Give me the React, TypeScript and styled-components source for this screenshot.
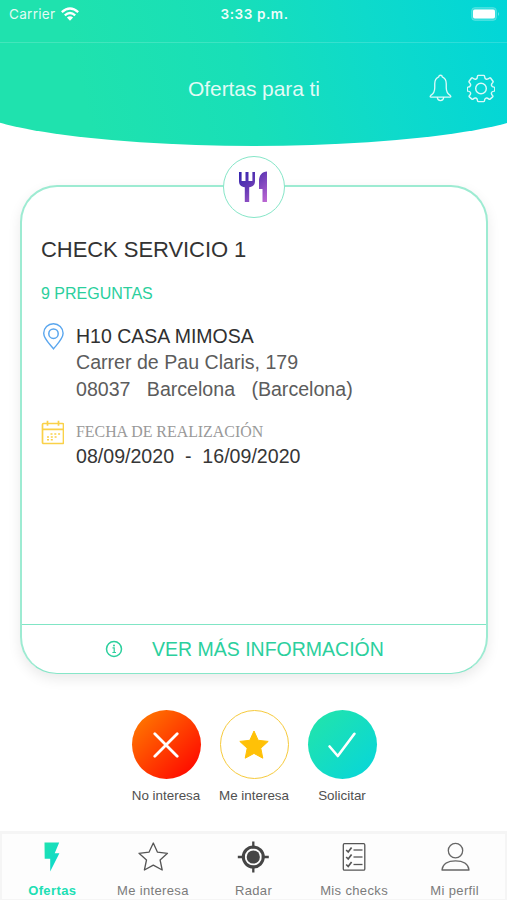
import React from 'react';
import styled, { createGlobalStyle, css } from 'styled-components';

const GlobalStyle = createGlobalStyle`
  * { box-sizing: border-box; }
  body { margin: 0; background: #fff; font-family: "Liberation Sans", Arial, sans-serif; }
  svg { display: block; flex: none; }
`;

const Screen = styled.div`
  width: 507px;
  height: 900px;
  overflow: hidden;
  display: flex;
  flex-direction: column;
  background: #fff;
`;

const Header = styled.header`
  position: relative;
  height: 146px;
  flex: none;
  overflow: hidden;
  color: #fff;
  &::before {
    content: '';
    position: absolute;
    inset: 0 -44.5px;
    border-radius: 0 0 298px 298px / 0 0 48.6px 48.6px;
    background: linear-gradient(76deg, #1fe2ae 22%, #18dfb8 48%, #0edacb 70%, #00d5da 96%);
  }
`;

const StatusBar = styled.div`
  position: relative;
  display: grid;
  grid-template-columns: 1fr auto 1fr;
  align-items: center;
  height: 43px;
  padding: 0 7px 15px 9px;
  border-bottom: 1px solid rgba(255, 255, 255, 0.16);
  font-family: Inter, sans-serif;
`;

const Carrier = styled.div`
  display: flex;
  align-items: center;
  gap: 6px;
  font-size: 13.6px;
  letter-spacing: 0.25px;
  color: rgba(255, 255, 255, 0.88);
`;

const Clock = styled.div`
  font-size: 13.6px;
  font-weight: 600;
  letter-spacing: 0.55px;
  color: rgba(255, 255, 255, 0.95);
`;

const BatterySlot = styled.div`
  display: flex;
  justify-content: flex-end;
`;

const NavBar = styled.div`
  position: relative;
  display: grid;
  grid-template-columns: 1fr auto 1fr;
  align-items: center;
  height: 90px;
  padding: 0 12px;
`;

const Title = styled.h1`
  grid-column: 2;
  margin: 2px 0 0 1px;
  font-size: 21px;
  line-height: 26px;
  font-weight: 400;
  letter-spacing: -0.08px;
  color: rgba(255, 255, 255, 0.88);
`;

const NavActions = styled.div`
  display: flex;
  justify-content: flex-end;
  align-items: center;
  gap: 15px;
`;

const Card = styled.article`
  position: relative;
  display: flex;
  flex-direction: column;
  width: 468px;
  height: 489px;
  flex: none;
  margin: 39px 0 0 20px;
  border: 2px solid #9debd2;
  border-bottom: 1px solid #86e6c8;
  border-radius: 37px;
  background: #fff;
  box-shadow: 0 5px 13px rgba(0, 0, 0, 0.085);
`;

const CategoryBadge = styled.div`
  position: absolute;
  top: -31px;
  left: 201px;
  width: 62px;
  height: 62px;
  border: 1.3px solid #86e6c8;
  border-radius: 50%;
  background: #fff;
  display: flex;
  align-items: center;
  justify-content: center;
`;

const CardBody = styled.div`
  flex: 1;
  padding: 50px 20px 0 19px;
`;

const CardTitle = styled.h2`
  margin: 0;
  font-size: 22px;
  line-height: 26px;
  font-weight: 400;
  letter-spacing: -0.06px;
  color: #333;
`;

const Questions = styled.p`
  margin: 20px 0 0;
  font-size: 16px;
  line-height: 22px;
  color: #2bcf9d;
`;

const Detail = styled.div<{ $top: number }>`
  display: flex;
  align-items: flex-start;
  gap: 12px;
  margin-top: ${(p) => p.$top}px;
`;

const Lines = styled.div`
  display: flex;
  flex-direction: column;
`;

type Tone = 'strong' | 'soft' | 'date';
const tones = {
  strong: css`font-size: 19.5px; line-height: 26px; color: #303030;`,
  soft: css`font-size: 19.6px; line-height: 26.5px; color: #5c5c5c;`,
  date: css`font-size: 19.6px; line-height: 24px; color: #363636;`,
};

const Line = styled.div<{ $tone: Tone }>`
  white-space: pre;
  ${(p) => tones[p.$tone]}
`;

const Caption = styled.div`
  font-family: "Liberation Serif", "Times New Roman", serif;
  font-size: 15.9px;
  line-height: 24px;
  color: #999;
`;

const MoreInfo = styled.button`
  display: flex;
  align-items: center;
  height: 49px;
  padding: 0 0 0 83px;
  gap: 29px;
  border: 0;
  border-top: 1px solid #80e5c5;
  background: none;
  font-family: inherit;
  font-size: 19.5px;
  color: #2bcf9d;
`;

const Actions = styled.div`
  display: flex;
  justify-content: center;
  margin: 36px 0 0 1px;
`;

const Action = styled.div`
  display: flex;
  flex-direction: column;
  align-items: center;
  width: 88px;
  font-size: 13.4px;
  line-height: 18px;
  white-space: nowrap;
  color: #505050;
`;

type Kind = 'reject' | 'favourite' | 'accept';
const fills = {
  reject: css`background: linear-gradient(135deg, #ff7800 8%, #ff0c00 88%);`,
  favourite: css`background: #fff; border: 1.3px solid #f6ca3c;`,
  accept: css`background: linear-gradient(135deg, #20e3ae 12%, #08d6d8 92%);`,
};

const RoundButton = styled.button<{ $kind: Kind }>`
  width: 69px;
  height: 69px;
  margin-bottom: 8px;
  padding: 0;
  border: 0;
  border-radius: 50%;
  display: flex;
  align-items: center;
  justify-content: center;
  ${(p) => fills[p.$kind]}
`;

const TabBar = styled.nav`
  display: grid;
  grid-template-columns: repeat(5, 1fr);
  height: 69px;
  flex: none;
  margin-top: auto;
  padding: 0;
  border: 2px solid #f5f5f5;
  border-top-width: 3px;
  border-bottom-width: 1px;
  background: #fdfdfd;
`;

const Tab = styled.div<{ $active?: boolean }>`
  display: flex;
  flex-direction: column;
  align-items: center;
  padding-top: 7px;
  gap: 10px;
  font-size: 13px;
  line-height: 16px;
  letter-spacing: ${(p) => (p.$active ? 0.4 : 0.35)}px;
  font-weight: ${(p) => (p.$active ? 700 : 400)};
  color: ${(p) => (p.$active ? '#20dfb4' : '#7b7b7b')};
`;

const WifiIcon = () => (
  <svg width="18" height="14" viewBox="0 0 18 14" fill="none" stroke="#fff" strokeWidth="2.3">
    <path d="M.8 5.1Q9-2.2 17.2 5.1" />
    <path d="M3.8 8.4Q9 3.6 14.2 8.4" />
    <path d="M9 13.7 5.9 10.5Q9 7.9 12.1 10.5Z" fill="#fff" stroke="none" />
  </svg>
);

const BatteryIcon = () => (
  <svg width="29" height="14" viewBox="0 0 29 14">
    <rect x=".5" y=".5" width="25" height="13" rx="3.5" fill="#fff" fillOpacity=".2" stroke="#fff" strokeOpacity=".18" />
    <rect x="2" y="2.5" width="22" height="9" rx="1.8" fill="#fff" />
    <path d="M27 5q2 2 0 4Z" fill="#fff" fillOpacity=".4" />
  </svg>
);

const BellIcon = () => (
  <svg width="23" height="28" viewBox="0 0 24 28" fill="none" stroke="#fff" strokeOpacity=".85" strokeWidth="1.4" strokeLinejoin="round">
    <path d="M10.2 2.3Q10.2.7 12 .7t1.8 1.6Q18 4.1 18 9.5v4.2c0 4.100 1.300 6.300 4.100 8q1.500 1.900-.3 1.900H2.200q-1.800 0-.3-1.900c2.800-1.700 4.100-3.900 4.100-8V9.500Q6 4.100 10.200 2.300Z" />
    <path d="M8.600 23.700Q9 27.200 12 27.200t3.400-3.500" />
  </svg>
);

const GearIcon = () => (
  <svg width="28" height="29" viewBox="0.5 0.5 29 29" fill="none" stroke="#fff" strokeOpacity=".85" strokeWidth="1.5" strokeLinejoin="round">
    <path d="M12.2 1.4h5.6q.7 0 .8.8c.2 2.2.7 2.9 1.9 3.2s1.8 0 3.3-1.300q.6-.5 1.100 0l2.500 3.400q.4.600-.2 1.200c-1.500 1.400-1.700 2.200-1.200 3.400s1.100 1.400 2.600 1.500q.7 0 .7.800v2.400q0 .8-.8.900c-1.800.1-2.400.7-2.700 1.800s0 1.800 1.300 3.100q.5.500 0 1.100L24.400 26q-.5.500-1.200 0c-1.400-1.300-2-1.500-3.100-1.100s-1.500 1-1.500 2.900q0 .8-.8.8h-5.600q-.8 0-.8-.8c0-1.900-.5-2.600-1.600-2.900s-1.700-.1-3 1.100q-.6.500-1.200 0l-2.700-2.300q-.5-.6 0-1.100c1.300-1.300 1.600-2 1.300-3.100s-1-1.700-2.600-1.800q-.8-.1-.8-.9v-2.400q0-.8.7-.8c1.500-.1 2.100-.5 2.600-1.600s.2-1.900-1.200-3.300q-.6-.6-.2-1.200l2.500-3.400q.5-.5 1.100 0c1.500 1.300 2.100 1.600 3.300 1.300s1.700-1 1.800-3.200q.1-.8.800-.8Z" />
    <circle cx="15" cy="15" r="5.500" />
  </svg>
);

const CutleryIcon = () => (
  <svg width="30" height="32" viewBox="0 0 30 32">
    <defs>
      <linearGradient id="cutlery" x1="0" y1="0" x2="30" y2="32" gradientUnits="userSpaceOnUse">
        <stop offset="0" stopColor="#3023ae" />
        <stop offset=".4" stopColor="#6238b4" />
        <stop offset="1" stopColor="#c86dd7" />
      </linearGradient>
    </defs>
    <g fill="url(#cutlery)">
      <path d="M0 1h2.600v9h3.900V1h3v9h3.900V1H16v9c0 3.800-1.800 5.500-5.800 6.300V31H5.800V16.300C1.800 15.500 0 13.800 0 10Z" />
      <path d="M28 .5V31h-4.500V18H20V10C20 4.500 23 .5 28 .5Z" />
    </g>
  </svg>
);

const PinIcon = () => (
  <svg width="23" height="28" viewBox="0 0 23 28" fill="none" stroke="#5aa6ee" strokeWidth="1.4">
    <path d="M12.500 25.800C8.100 20.500 2.700 15.600 2.700 10.300a9.700 9.600 0 0 1 19.400 0c0 5.300-5.200 10.200-9.600 15.500Z" />
    <circle cx="12.500" cy="10.700" r="4.700" strokeWidth="1.500" />
  </svg>
);

const CalendarIcon = () => (
  <svg width="23" height="25" viewBox="0 0 23 25" fill="none" stroke="#fad148" strokeWidth="1.700">
    <rect x="1.500" y="3.500" width="21" height="20" rx="1" />
    <path d="M1.500 9.300h21M6.500 .8v5M17.500 .8v5" />
    <path d="M9.500 14h10M6 17h10.500M6 19.800h7" strokeDasharray="2 1.800" strokeWidth="1.500" />
  </svg>
);

const InfoIcon = () => (
  <svg width="18" height="18" viewBox="0 0 18 18" fill="none" stroke="#2bcf9d" strokeWidth="1.500">
    <circle cx="9" cy="9" r="7.500" />
    <path d="M7.500 7.800H9.200V12.300M7.400 12.500h3.600" strokeWidth="1.200" />
    <circle cx="9" cy="5.500" r="1" fill="#2bcf9d" stroke="none" />
  </svg>
);

const CrossIcon = () => (
  <svg width="26" height="26" viewBox="0 0 26 26" stroke="#fff" strokeWidth="2.800" strokeLinecap="round">
    <path d="m1.800 1.800 22.400 22.400M24.200 1.800 1.800 24.200" />
  </svg>
);

const StarIcon = () => (
  <svg width="30" height="30" viewBox="0 0 30 30" fill="#ffc107" stroke="#ffc107" strokeWidth="1" strokeLinejoin="round">
    <path d="m15 1 4.200 9.300 10 1.100-7.400 6.800 2 10L15 23.400 6.200 28.200l2-10L.8 11.400l10-1.100Z" />
  </svg>
);

const CheckIcon = () => (
  <svg width="28" height="26" viewBox="0 0 28 26" fill="none" stroke="#fff" strokeWidth="2.600" strokeLinecap="round" strokeLinejoin="round">
    <path d="M1.600 14.500 9.800 24 26.400 1.800" />
  </svg>
);

const BoltIcon = () => (
  <svg width="32" height="32" viewBox="0 0 32 32">
    <defs>
      <linearGradient id="bolt" x1="0" y1="0" x2="1" y2="1">
        <stop offset="0" stopColor="#20e3ae" />
        <stop offset="1" stopColor="#08d6d4" />
      </linearGradient>
    </defs>
    <path d="M8.500 1.500h14.700l-4.500 10.700h4.700L14.200 30.500V17.700H8.700Z" fill="url(#bolt)" />
  </svg>
);

const StarOutlineIcon = () => (
  <svg width="32" height="32" viewBox="0 0 32 32" fill="none" stroke="#555" strokeWidth="1.300" strokeLinejoin="round">
    <path d="m16.300 2 4.200 9.200 10 1.100-7.400 6.700 2.100 10-8.900-4.900L7.400 29l2.100-10L2 12.300l10-1.100Z" />
  </svg>
);

const RadarIcon = () => (
  <svg width="32" height="32" viewBox="0 0 32 32" fill="none" stroke="#454545">
    <circle cx="16.300" cy="16" r="10" strokeWidth="3" />
    <circle cx="16.300" cy="16" r="6.600" fill="#454545" stroke="none" />
    <path d="M16.300 .5v7M16.300 24.500v7M.8 16h7M24.800 16h7" strokeWidth="2.300" />
  </svg>
);

const ChecklistIcon = () => (
  <svg width="32" height="32" viewBox="0 0 32 32" fill="none" stroke="#555" strokeWidth="1.300">
    <rect x="5.300" y="2.700" width="21.500" height="26.500" rx="1.200" />
    {[9, 16, 23.5].map((y) => (
      <React.Fragment key={y}>
        <path d={`m8.200 ${y} 2 2 3.400-4.500`} strokeWidth="1.700" />
        <path d={`M15.500 ${y}h9`} />
      </React.Fragment>
    ))}
  </svg>
);

const ProfileIcon = () => (
  <svg width="32" height="32" viewBox="0 0 32 32" fill="none" stroke="#666" strokeWidth="1.300" strokeLinejoin="round">
    <circle cx="16.500" cy="9.600" r="7.200" />
    <path d="M3 29C3.500 23 9 19.800 16.500 19.800S29.500 23 30 29Z" />
  </svg>
);

const App = () => (
  <>
    <GlobalStyle />
    <Screen>
      <Header>
        <StatusBar>
          <Carrier>Carrier<WifiIcon /></Carrier>
          <Clock>3:33 p.m.</Clock>
          <BatterySlot><BatteryIcon /></BatterySlot>
        </StatusBar>
        <NavBar>
          <Title>Ofertas para ti</Title>
          <NavActions><BellIcon /><GearIcon /></NavActions>
        </NavBar>
      </Header>

      <Card>
        <CategoryBadge><CutleryIcon /></CategoryBadge>
        <CardBody>
          <CardTitle>CHECK SERVICIO 1</CardTitle>
          <Questions>9 PREGUNTAS</Questions>
          <Detail $top={18}>
            <PinIcon />
            <Lines>
              <Line $tone="strong">H10 CASA MIMOSA</Line>
              <Line $tone="soft">Carrer de Pau Claris, 179</Line>
              <Line $tone="soft">{'08037   Barcelona   (Barcelona)'}</Line>
            </Lines>
          </Detail>
          <Detail $top={17.5}>
            <CalendarIcon />
            <Lines>
              <Caption>FECHA DE REALIZACIÓN</Caption>
              <Line $tone="date">{'08/09/2020  -  16/09/2020'}</Line>
            </Lines>
          </Detail>
        </CardBody>
        <MoreInfo><InfoIcon />VER MÁS INFORMACIÓN</MoreInfo>
      </Card>

      <Actions>
        <Action><RoundButton $kind="reject"><CrossIcon /></RoundButton>No interesa</Action>
        <Action><RoundButton $kind="favourite"><StarIcon /></RoundButton>Me interesa</Action>
        <Action><RoundButton $kind="accept"><CheckIcon /></RoundButton>Solicitar</Action>
      </Actions>

      <TabBar>
        <Tab $active><BoltIcon />Ofertas</Tab>
        <Tab><StarOutlineIcon />Me interesa</Tab>
        <Tab><RadarIcon />Radar</Tab>
        <Tab><ChecklistIcon />Mis checks</Tab>
        <Tab><ProfileIcon />Mi perfil</Tab>
      </TabBar>
    </Screen>
  </>
);

export default App;
